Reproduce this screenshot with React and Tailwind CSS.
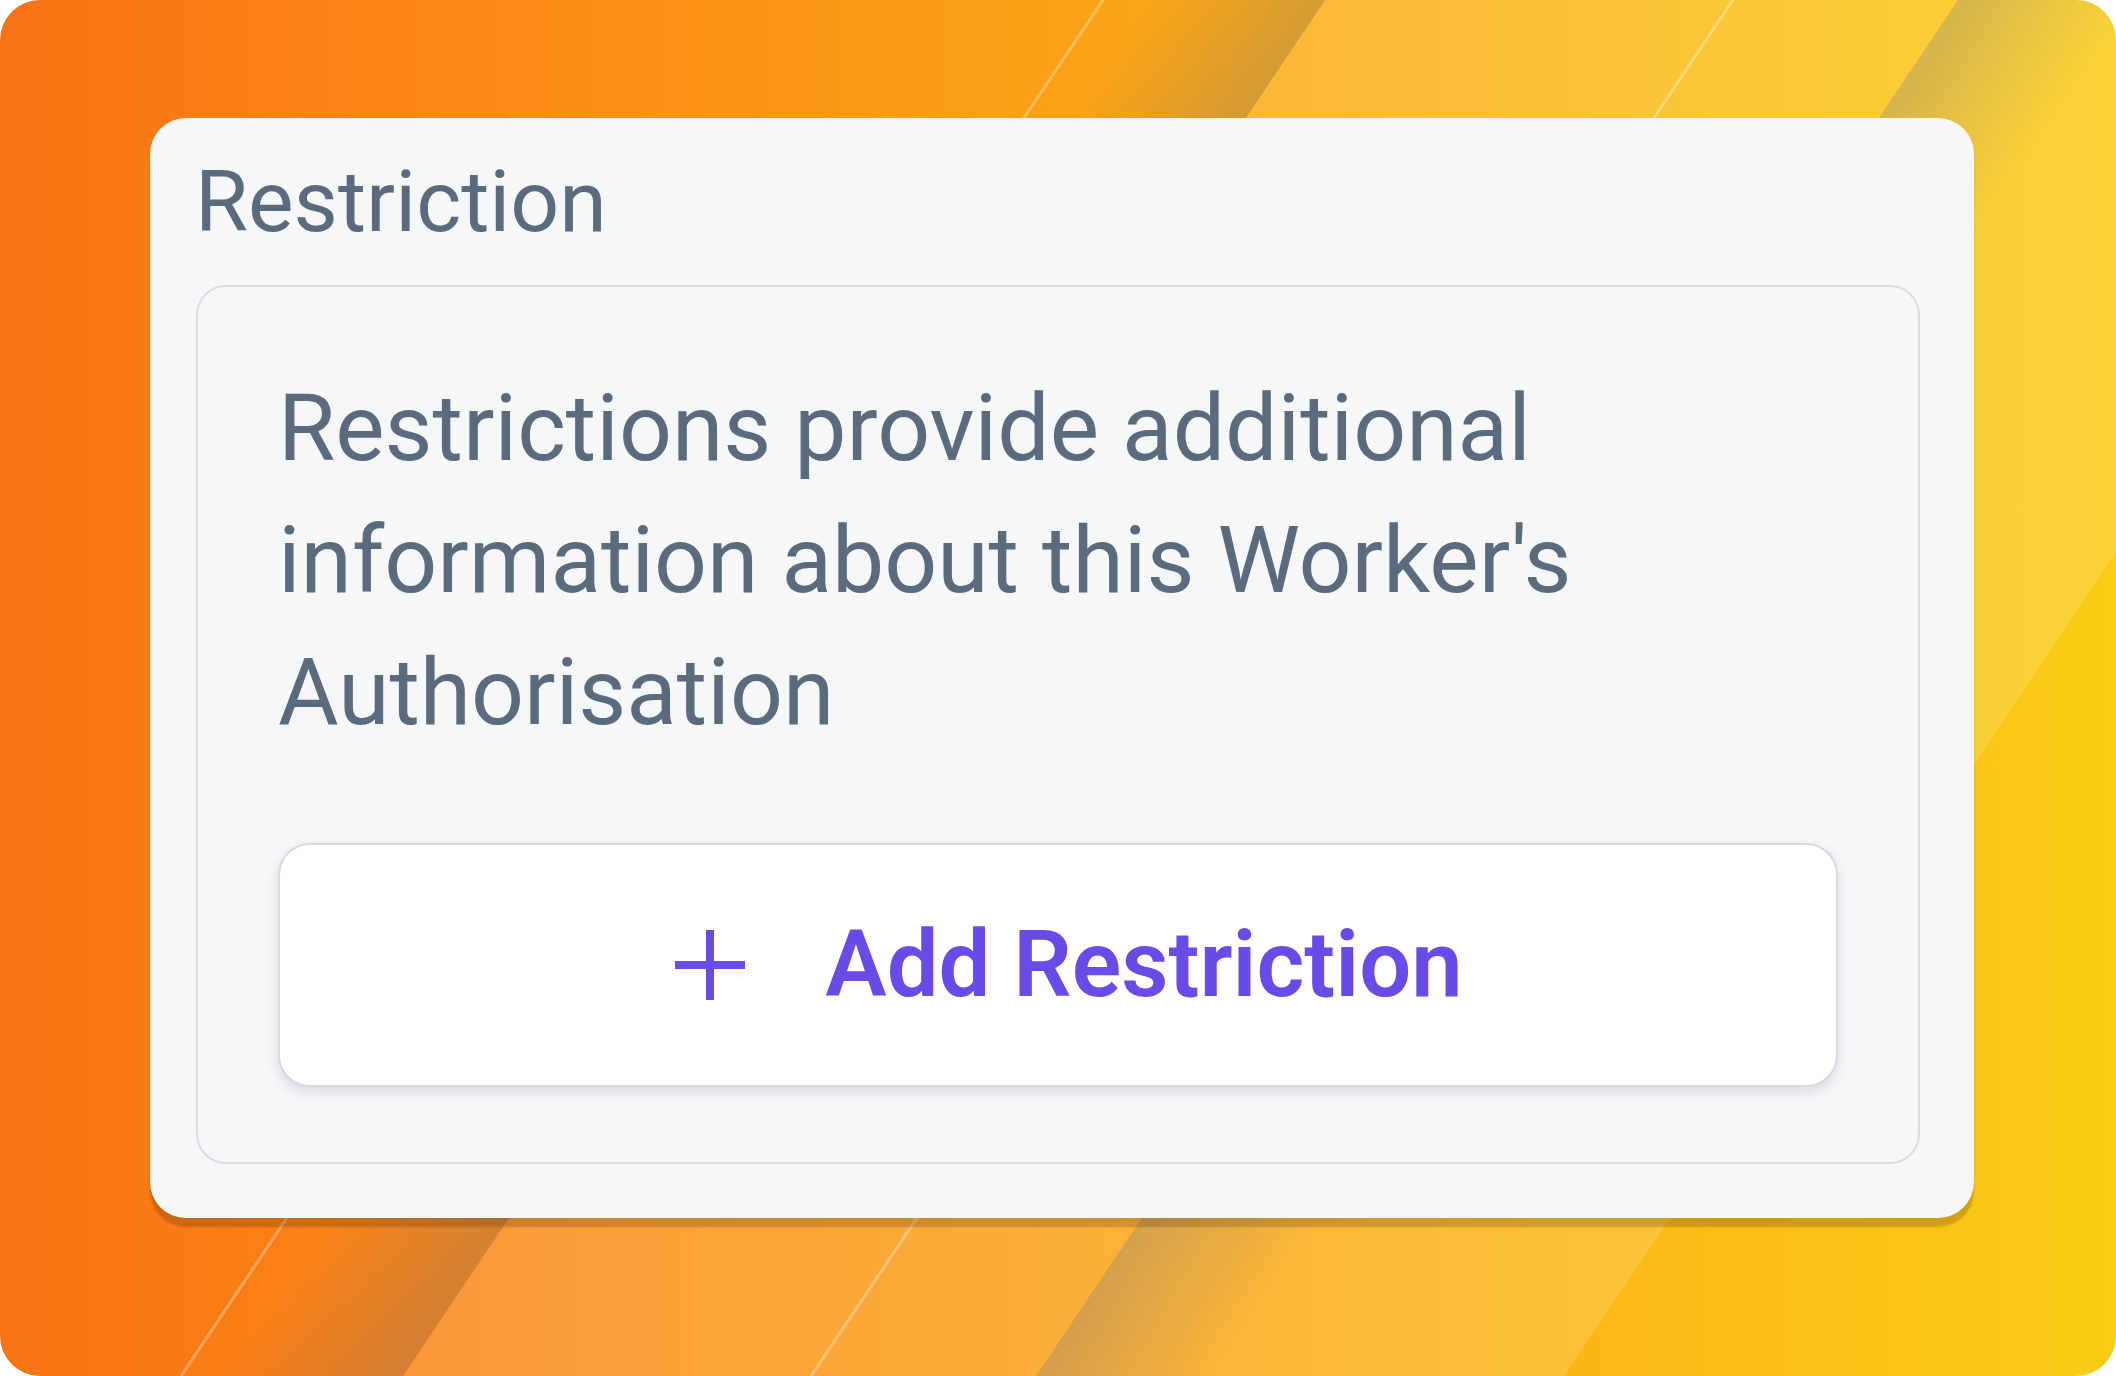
import React from 'react';

// Slanted light/shadow strips over the orange-to-yellow backdrop.
// Every strip edge follows x = x0 - 0.67 * y.
const SLOPE = 0.67;
const H = 1376;

const edge = (x0, y) => x0 - SLOPE * y;

const band = (left, right) =>
  `${left},0 ${right},0 ${edge(right, H)},${H} ${edge(left, H)},${H}`;

const Backdrop = () => (
  <svg
    className="absolute inset-0 h-full w-full"
    viewBox="0 0 2116 1376"
    preserveAspectRatio="none"
    aria-hidden="true"
  >
    <defs>
      <linearGradient id="shadeLeft" gradientUnits="userSpaceOnUse" x1="1145" y1="0" x2="1269.2" y2="83.3">
        <stop offset="0" stopColor="#5a6a90" stopOpacity="0" />
        <stop offset="1" stopColor="#5a6a90" stopOpacity="0.24" />
      </linearGradient>
      <linearGradient id="shadeRight" gradientUnits="userSpaceOnUse" x1="1958" y1="0" x2="2082.2" y2="83.3">
        <stop offset="0" stopColor="#5a6a90" stopOpacity="0.24" />
        <stop offset="1" stopColor="#5a6a90" stopOpacity="0" />
      </linearGradient>
    </defs>
    <polygon points={band(1325, 2486)} fill="#ffffff" fillOpacity="0.15" />
    <polygon points={band(1145, 1325)} fill="url(#shadeLeft)" />
    <polygon points={band(1958, 2138)} fill="url(#shadeRight)" />
    {[1103, 1733].map((x0) => (
      <line
        key={x0}
        x1={x0}
        y1="0"
        x2={edge(x0, H)}
        y2={H}
        stroke="#ffffff"
        strokeOpacity="0.3"
        strokeWidth="3"
      />
    ))}
  </svg>
);

const PlusIcon = () => (
  <svg width="70" height="70" viewBox="0 0 70 70" fill="none" aria-hidden="true">
    <path d="M35 0v70M0 35h70" stroke="currentColor" strokeWidth="8" />
  </svg>
);

const App = () => {
  return (
    <div className="h-[1376px] w-[2116px] bg-white font-['Roboto','Liberation_Sans',sans-serif]">
      <div className="relative h-full w-full overflow-hidden rounded-[40px] bg-gradient-to-r from-[#f97316] to-[#facc15] pl-[150px] pr-[142px] pt-[118px]">
        <Backdrop />

        {/* Restriction card */}
        <section className="relative rounded-[36px] bg-[#f5f7f9] pb-[54px] pl-[46px] pr-[54px] pt-[32px] shadow-[0_9px_2px_rgba(60,30,0,0.22)]">
          <h2 className="-ml-[1px] text-[86px] leading-[104px] text-[#5b6b7e]">Restriction</h2>

          <div className="mt-[31px] rounded-[30px] border-2 border-[#d9dce2] px-[80px] pb-[75px] pt-[76px]">
            <p className="text-[93px] leading-[132px] text-[#5b6b7e]">
              Restrictions provide additional information about this Worker's Authorisation
            </p>

            <button
              type="button"
              className="mt-[84px] flex h-[244px] w-full items-center justify-center gap-[80px] rounded-[32px] border-2 border-[#d8dae2] bg-white pl-[22px] text-[92px] font-semibold text-[#6a4be8] shadow-[0_5px_12px_rgba(40,50,90,0.14)]"
            >
              <PlusIcon />
              <span>Add Restriction</span>
            </button>
          </div>
        </section>
      </div>
    </div>
  );
};

export default App;
